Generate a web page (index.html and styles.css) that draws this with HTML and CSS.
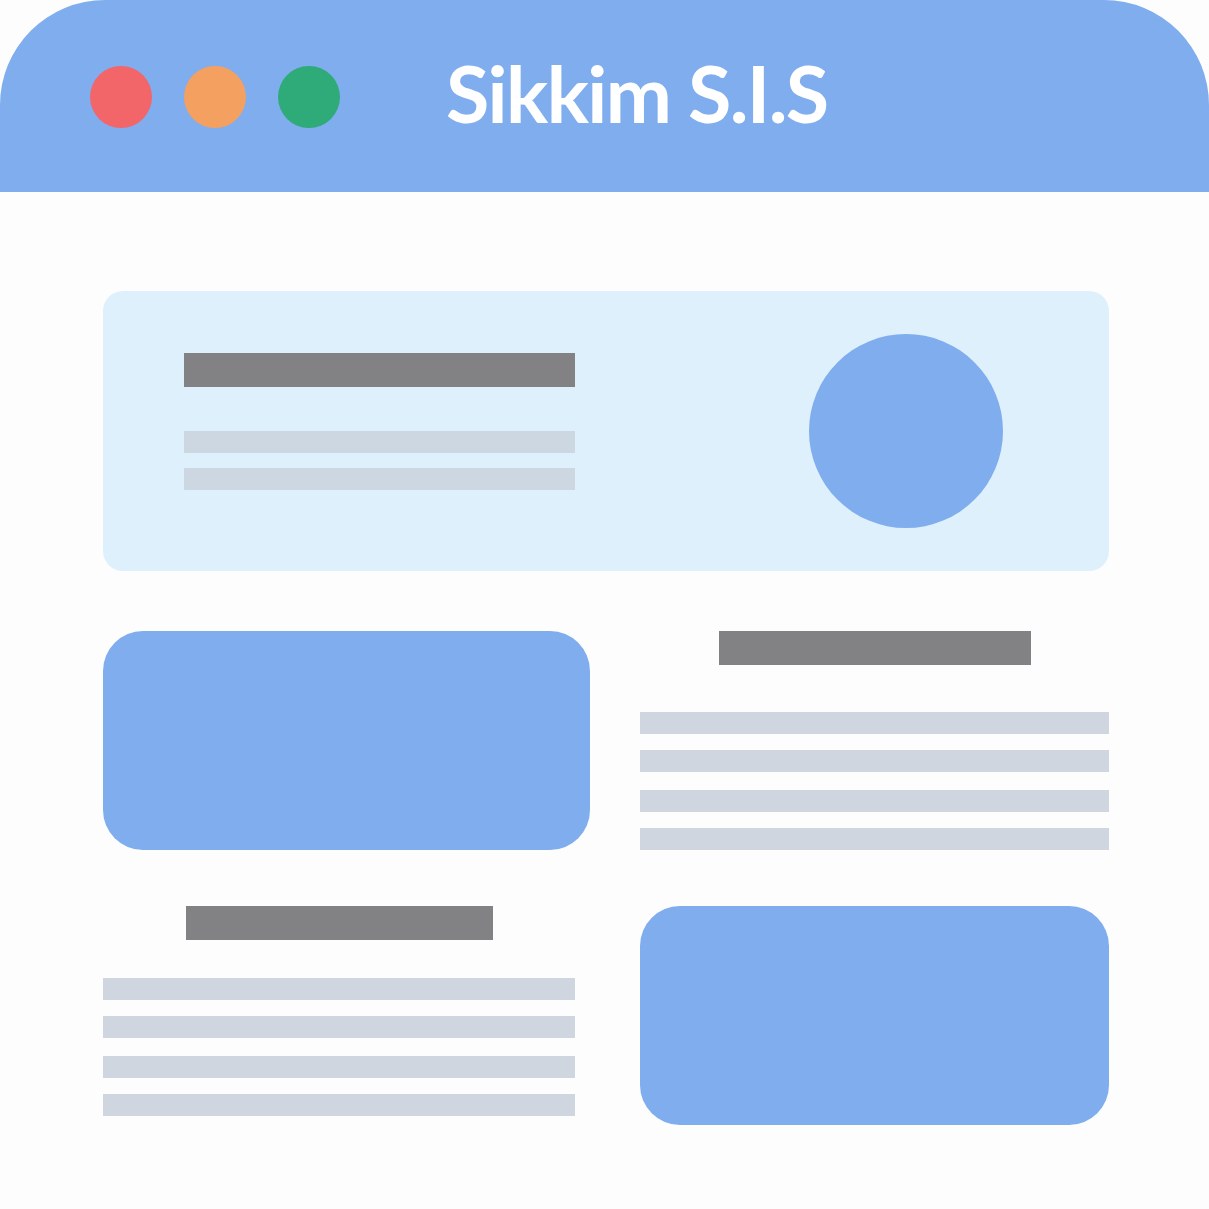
FILE: index.html
```html
<!DOCTYPE html>
<html lang="en">
<head>
    <meta charset="UTF-8">
    <meta name="viewport" content="width=device-width, initial-scale=1.0">
    <title>Sikkim S.I.S</title>
    <link rel="stylesheet" href="styles.css">
</head>
<body>
    <div class="window">
        <!-- 顶部栏 -->
        <div class="window_bar">
            <div class="bar_dots">
                <span class="bar_dot dot_red"></span>
                <span class="bar_dot dot_orange"></span>
                <span class="bar_dot dot_green"></span>
            </div>
            <span class="bar_title">Sikkim S.I.S</span>
        </div>
        <!-- 内容 -->
        <div class="window_body">
            <div class="hero">
                <div class="hero_text">
                    <div class="line_dark line_hero"></div>
                    <div class="hero_lines">
                        <div class="line_light"></div>
                        <div class="line_light"></div>
                    </div>
                </div>
                <div class="hero_circle"></div>
            </div>
            <div class="grid">
                <div class="block"></div>
                <div class="text_block">
                    <div class="line_dark line_title_right"></div>
                    <div class="text_lines">
                        <div class="line_light"></div>
                        <div class="line_light"></div>
                        <div class="line_light line_gap"></div>
                        <div class="line_light"></div>
                    </div>
                </div>
                <div class="text_block text_block_left">
                    <div class="line_dark line_title_left"></div>
                    <div class="text_lines text_lines_left">
                        <div class="line_light"></div>
                        <div class="line_light"></div>
                        <div class="line_light line_gap"></div>
                        <div class="line_light"></div>
                    </div>
                </div>
                <div class="block"></div>
            </div>
        </div>
    </div>
</body>
</html>
```

FILE: styles.css
```css
html,body{
    padding:0;
    margin:0;
    width:100%;
    height:100%;
    background:#FDFDFD;
}
.window{
    width:1209px;
    height:1209px;
}
.window_bar{
    display:flex;
    align-items:center;
    height:192px;
    padding-left:90px;
    box-sizing:border-box;
    border-radius:105px 105px 0 0;
    background-color:#7FADEE;
}
.bar_dots{
    display:flex;
    gap:32px;
    margin-top:1px;
}
.bar_dot{
    display:inline-block;
    width:62px;
    height:62px;
    border-radius:50%;
}
.dot_red{
    background-color:#F26669;
}
.dot_orange{
    background-color:#F4A061;
}
.dot_green{
    background-color:#2EAB78;
}
.bar_title{
    margin-left:106px;
    margin-top:-7px;
    font-family:Lato, "Noto Sans", sans-serif;
    font-weight:700;
    font-size:79px;
    letter-spacing:-1.6px;
    line-height:1;
    color:#FFFFFF;
}
.window_body{
    padding:99px 100px 0 103px;
}
/* 
    顶部卡片
*/
.hero{
    display:flex;
    box-sizing:border-box;
    height:280px;
    padding-left:81px;
    border-radius:20px;
    background-color:#DFF0FD;
}
.hero_text{
    width:391px;
    padding-top:62px;
}
.line_dark{
    height:34px;
    background-color:#828285;
}
.line_light{
    height:22px;
    background-color:#CFD6DF;
}
.hero .line_light{
    background-color:#CCD7E2;
}
.hero_lines{
    display:flex;
    flex-direction:column;
    gap:15px;
    margin-top:44px;
}
.hero_circle{
    align-self:center;
    width:194px;
    height:194px;
    margin-left:234px;
    border-radius:50%;
    background-color:#7FADEE;
}
.grid{
    display:grid;
    grid-template-columns:487px 469px;
    grid-template-rows:219px 219px;
    column-gap:50px;
    row-gap:56px;
    margin-top:60px;
}
.block{
    border-radius:40px;
    background-color:#7FADEE;
}
.text_block{
    display:flex;
    flex-direction:column;
    align-items:center;
}
.text_block_left{
    width:472px;
}
.line_title_right{
    width:312px;
}
.line_title_left{
    width:307px;
}
.text_lines{
    display:flex;
    flex-direction:column;
    gap:16px;
    width:100%;
    margin-top:47px;
}
.text_lines_left{
    margin-top:38px;
}
.text_lines .line_gap{
    margin-top:2px;
}
```
